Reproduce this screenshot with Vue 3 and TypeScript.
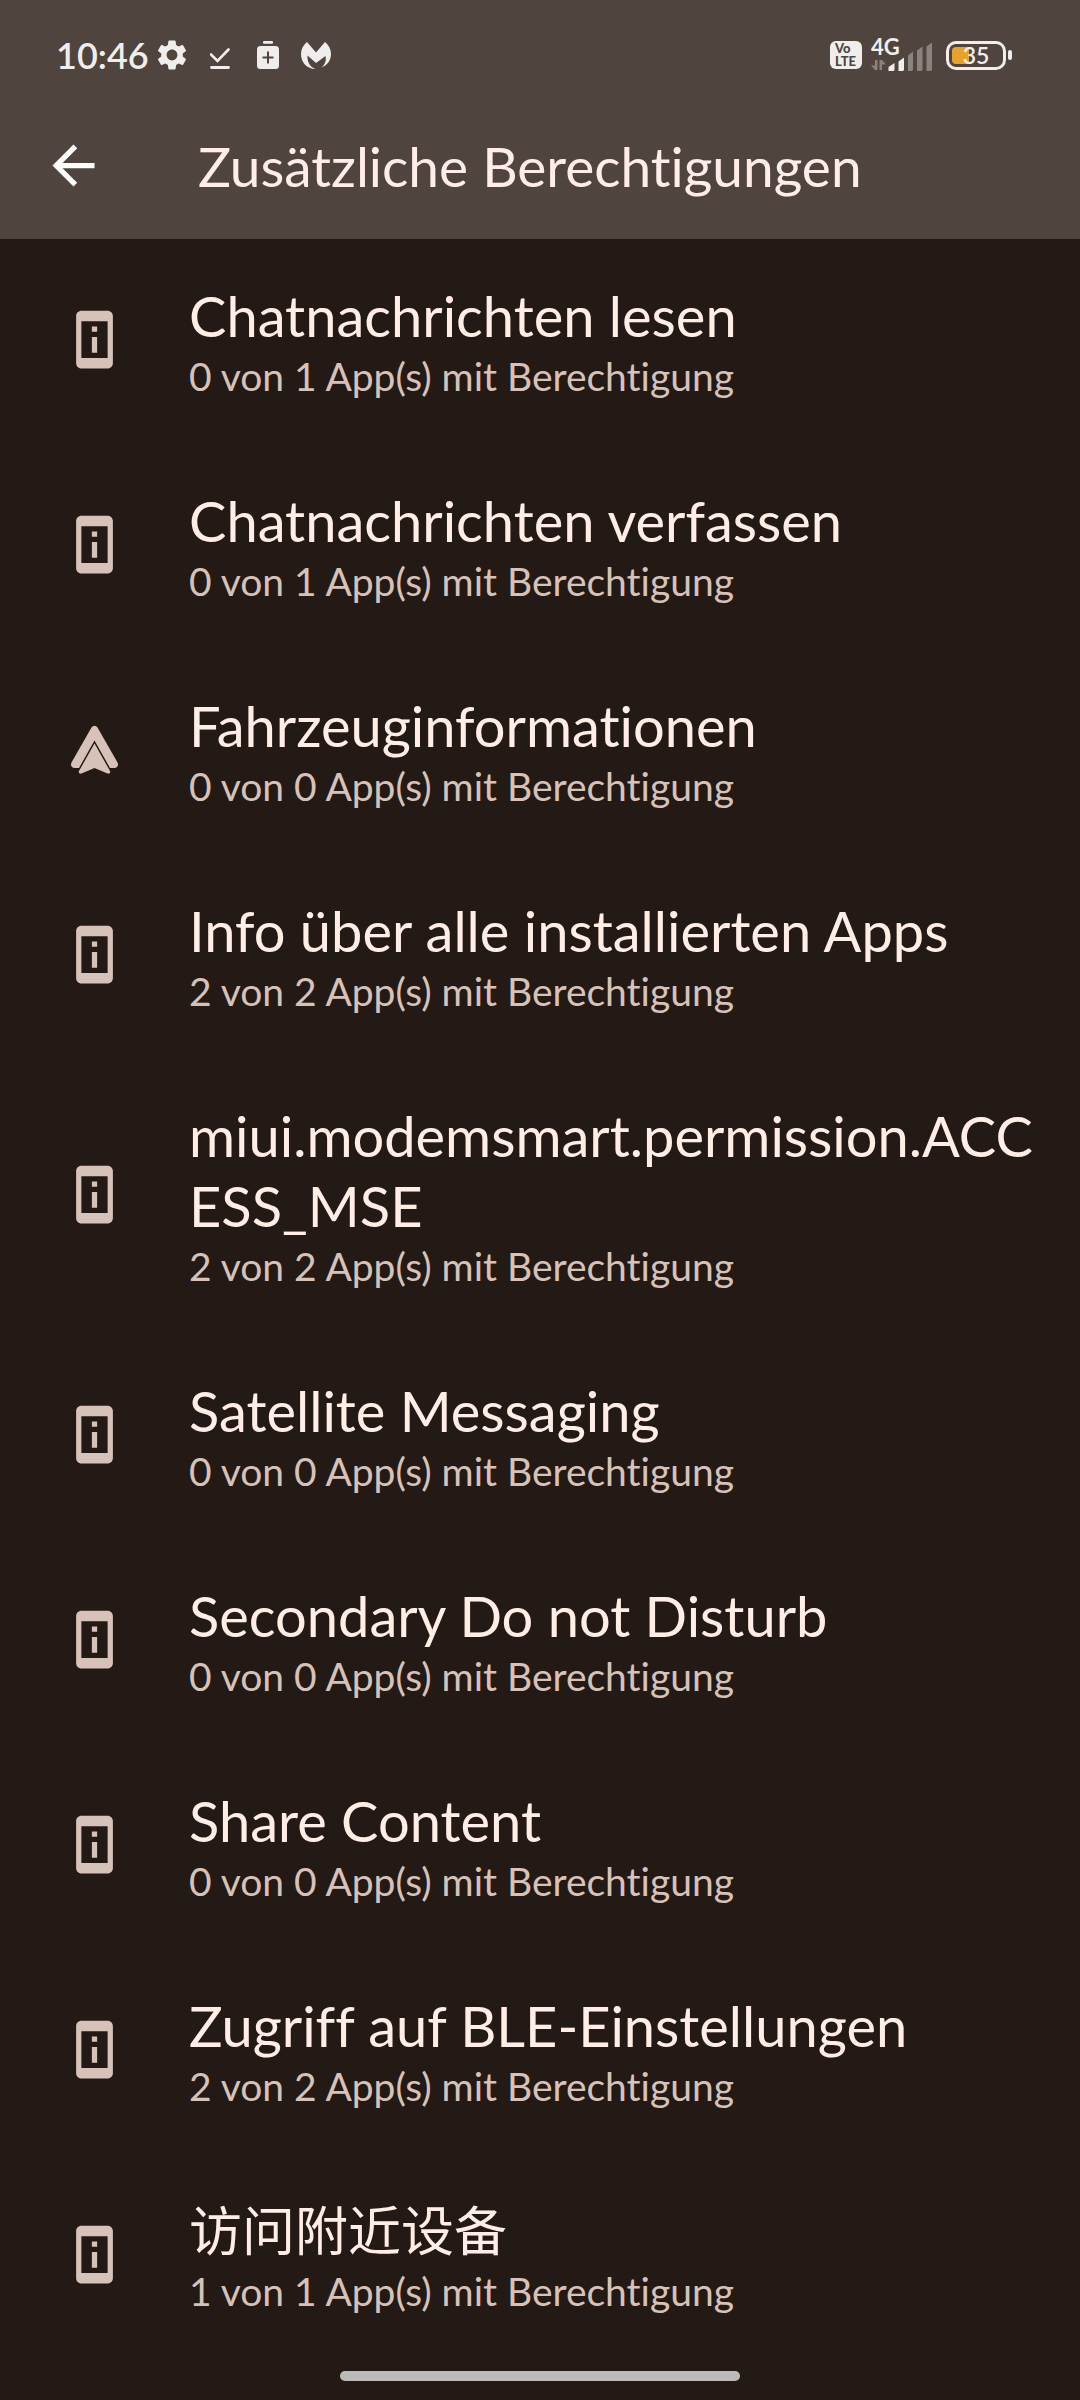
<script setup lang="ts">
interface Permission {
  title: string
  granted: number
  total: number
  icon: 'device' | 'car'
  lang?: string
}

const permissions: Permission[] = [
  { title: 'Chatnachrichten lesen', granted: 0, total: 1, icon: 'device' },
  { title: 'Chatnachrichten verfassen', granted: 0, total: 1, icon: 'device' },
  { title: 'Fahrzeuginformationen', granted: 0, total: 0, icon: 'car' },
  { title: 'Info über alle installierten Apps', granted: 2, total: 2, icon: 'device' },
  { title: 'miui.modemsmart.permission.ACCESS_MSE', granted: 2, total: 2, icon: 'device' },
  { title: 'Satellite Messaging', granted: 0, total: 0, icon: 'device' },
  { title: 'Secondary Do not Disturb', granted: 0, total: 0, icon: 'device' },
  { title: 'Share Content', granted: 0, total: 0, icon: 'device' },
  { title: 'Zugriff auf BLE-Einstellungen', granted: 2, total: 2, icon: 'device' },
  { title: '访问附近设备', granted: 1, total: 1, icon: 'device', lang: 'zh' },
]

const batteryLevel = 35
</script>

<template>
  <div class="screen">
    <header class="top">
      <div class="status">
        <div class="status-left">
          <time class="clock">10:46</time>
          <svg class="gear" viewBox="2 2 20 20" aria-hidden="true">
            <path d="M19.14 12.94c.04-.3.06-.61.06-.94 0-.32-.02-.64-.07-.94l2.03-1.58a.49.49 0 0 0 .12-.61l-1.92-3.32a.49.49 0 0 0-.59-.22l-2.39.96c-.5-.38-1.03-.7-1.62-.94l-.36-2.54a.48.48 0 0 0-.48-.41h-3.84c-.24 0-.43.17-.47.41l-.36 2.54c-.59.24-1.13.57-1.62.94l-2.39-.96a.48.48 0 0 0-.59.22L2.74 8.87c-.12.21-.08.47.12.61l2.03 1.58c-.05.3-.09.63-.09.94s.02.64.07.94l-2.03 1.58a.49.49 0 0 0-.12.61l1.92 3.32c.12.22.37.29.59.22l2.39-.96c.5.38 1.03.7 1.62.94l.36 2.54c.05.24.24.41.48.41h3.84c.24 0 .44-.17.47-.41l.36-2.54c.59-.24 1.13-.56 1.62-.94l2.39.96c.22.08.47 0 .59-.22l1.92-3.32a.48.48 0 0 0-.12-.61l-2.01-1.58zM12 15.6A3.61 3.61 0 0 1 8.4 12c0-1.98 1.62-3.6 3.6-3.6s3.6 1.62 3.6 3.6-1.62 3.6-3.6 3.6z" />
          </svg>
          <svg class="done" viewBox="0 0 20 28" aria-hidden="true">
            <path d="M1 13.500l6.500 6.500L18.500 8.500" fill="none" stroke="currentColor" stroke-width="2.600" stroke-linecap="round" />
            <path d="M1.500 26.500h17" stroke="currentColor" stroke-width="2.800" stroke-linecap="round" />
          </svg>
          <svg class="pack" viewBox="0 0 22 28" aria-hidden="true">
            <rect x="6" y="0" width="10" height="2.800" rx="1" />
            <path fill-rule="evenodd" d="M3.500 5h15A3.500 3.500 0 0 1 22 8.500v16a3.500 3.500 0 0 1-3.500 3.500h-15A3.500 3.500 0 0 1 0 24.500v-16A3.500 3.500 0 0 1 3.500 5zM10 10.500v5H5.500v2H10v5h2v-5h4.500v-2H12v-5z" />
          </svg>
          <svg class="wings" viewBox="0 0 30 27" aria-hidden="true">
            <path d="M6 0L15 10.500 24 0c3.700 3 6 7 6 12 0 6.500-4 11.500-9.500 13.500 3.500-3 5-6.500 4-11.500L15 21 6.500 13.500C6 20 9 25 14.500 27 6 27 0 20.500 0 12 0 7 2.300 3 6 0z" />
          </svg>
        </div>
        <div class="status-right">
          <span class="volte"><span>Vo</span><span>LTE</span></span>
          <div class="signal">
            <span class="network">4G</span>
            <svg class="bars" viewBox="0 0 62 31" aria-hidden="true">
              <g class="dim">
                <path d="M4 20v10h2.500V20zM4 30L0 25.500h4zM8.500 20v10H11V20zM11 20l4 4.500h-4z" />
                <path d="M37 31V15.500l5-4V29.500a1.500 1.500 0 0 1-1.500 1.500zM46 31V10.500l5.500-4V29.500a1.500 1.500 0 0 1-1.500 1.500zM55.500 31V6.500l5.500-4V29.500a1.500 1.500 0 0 1-1.500 1.500z" />
              </g>
              <path d="M17.500 31v-4l6-4V29.500a1.500 1.500 0 0 1-1.500 1.500zM27.500 31V21.500l5.500-4V29.500a1.500 1.500 0 0 1-1.500 1.500z" />
            </svg>
          </div>
          <div class="battery">
            <span class="cell">
              <span class="charge" :style="{ width: batteryLevel + '%' }"></span>
              <span class="level">{{ batteryLevel }}</span>
            </span>
            <span class="nub"></span>
          </div>
        </div>
      </div>
      <div class="toolbar">
        <button class="back" type="button" aria-label="Zurück">
          <svg viewBox="0 0 24 24" aria-hidden="true">
            <path d="M20 11H7.830l5.590-5.590L12 4l-8 8 8 8 1.410-1.410L7.830 13H20v-2z" />
          </svg>
        </button>
        <h1>Zusätzliche Berechtigungen</h1>
      </div>
    </header>

    <main>
      <ul class="list">
        <li v-for="item in permissions" :key="item.title">
          <a class="row" href="#">
            <svg v-if="item.icon === 'device'" class="icon" viewBox="0 0 24 24" aria-hidden="true">
              <path d="M13 7h-2v2h2V7zm0 4h-2v6h2v-6zm4-9.990L7 1c-1.100 0-2 .9-2 2v18c0 1.100.9 2 2 2h10c1.100 0 2-.9 2-2V3c0-1.100-.9-1.990-2-1.990zM17 19H7V5h10v14z" />
            </svg>
            <svg v-else class="icon" viewBox="0 0 63 63" aria-hidden="true">
              <path d="M28.500 9.500a3.500 3.500 0 0 1 6 0L54.500 44.500c1.500 3-.5 5.500-3 5.500h-4.500L31.500 22.500 16 50h-4.500c-2.500 0-4.500-2.500-3-5.500z" />
              <path d="M31.500 25.500L47 53c.8 2-.6 3-2.500 2.500L31.500 50l-13 5.500C16.600 56 15.200 55 16 53z" />
            </svg>
            <span class="text">
              <span class="title" :lang="item.lang">{{ item.title }}</span>
              <span class="summary">{{ item.granted }} von {{ item.total }} App(s) mit Berechtigung</span>
            </span>
          </a>
        </li>
      </ul>
    </main>

    <footer class="nav"><span class="handle"></span></footer>
  </div>
</template>

<style>
body {
  margin: 0;
  background: #231a15;
}
</style>

<style scoped>
.screen {
  min-height: 100vh;
  display: flex;
  flex-direction: column;
  background: #231a15;
  color: #ffede6;
  font-family: Lato, "Noto Sans CJK SC", sans-serif;
  font-variant-ligatures: none;
}

svg {
  display: block;
  flex: none;
  fill: currentColor;
}

.top {
  background: #50443e;
}

.status {
  height: 110px;
  display: flex;
  justify-content: space-between;
  padding: 0 68px 0 56px;
  color: #f0eeec;
}

.status-left,
.status-right {
  display: flex;
  align-items: center;
}

.clock {
  font-size: 36px;
  line-height: 44px;
  font-weight: 600;
  margin-right: 8px;
}

.gear {
  width: 30px;
  height: 30px;
}

.done {
  width: 20px;
  height: 28px;
  margin-left: 23px;
}

.pack {
  width: 22px;
  height: 28px;
  margin-left: 27px;
}

.wings {
  width: 30px;
  height: 27px;
  margin-left: 22px;
}

.volte {
  width: 32px;
  height: 28px;
  border-radius: 6px;
  background: #f0eeec;
  color: #50443e;
  display: flex;
  flex-direction: column;
  justify-content: center;
  padding-left: 5px;
  box-sizing: border-box;
  font-size: 13px;
  line-height: 13px;
  font-weight: 900;
}

.signal {
  position: relative;
  margin: 0 13px 0 9px;
}

.network {
  position: absolute;
  left: 0;
  top: -4px;
  font-size: 22px;
  line-height: 22px;
  font-weight: 700;
}

.bars {
  width: 62px;
  height: 31px;
}

.dim {
  fill: #8b817d;
}

.battery {
  display: flex;
  align-items: center;
  gap: 2px;
}

.cell {
  position: relative;
  width: 60px;
  height: 29px;
  box-sizing: border-box;
  border: 3px solid #f0eeec;
  border-radius: 10px;
  padding: 3px;
  display: flex;
}

.charge {
  border-radius: 4px 0 0 4px;
  background: #e8a12b;
}

.level {
  position: absolute;
  inset: 0;
  text-align: center;
  font-size: 23px;
  line-height: 23px;
  font-weight: 600;
}

.nub {
  width: 4px;
  height: 10px;
  border-radius: 2px;
  background: #f0eeec;
}

.toolbar {
  display: flex;
  align-items: center;
  height: 111px;
  padding: 0 48px 18px 42px;
}

.back {
  width: 63px;
  height: 63px;
  padding: 0;
  border: 0;
  background: none;
  color: #ffffff;
  margin-right: 93px;
}

h1 {
  margin: 0;
  font-size: 55px;
  line-height: 70px;
  font-weight: 400;
}

.list {
  margin: 0;
  padding: 0;
  list-style: none;
}

.row {
  display: flex;
  align-items: center;
  padding: 42px 42px 43px 63px;
  color: inherit;
  text-decoration: none;
}

.icon {
  width: 63px;
  height: 63px;
  margin-bottom: 3px;
  color: #d7c2b9;
}

.text {
  flex: 1;
  min-width: 0;
  margin-left: 63px;
  display: flex;
  flex-direction: column;
}

.title {
  font-size: 56px;
  line-height: 70px;
  overflow-wrap: anywhere;
}

.title:lang(zh) {
  font-size: 53px;
}

.summary {
  font-size: 39px;
  line-height: 50px;
  color: #d7c2b9;
}

.nav {
  margin-top: auto;
  display: flex;
  justify-content: center;
  padding: 12px 0 19px;
}

.handle {
  width: 37%;
  height: 10px;
  border-radius: 5px;
  background: #bdbbb9;
}
</style>
